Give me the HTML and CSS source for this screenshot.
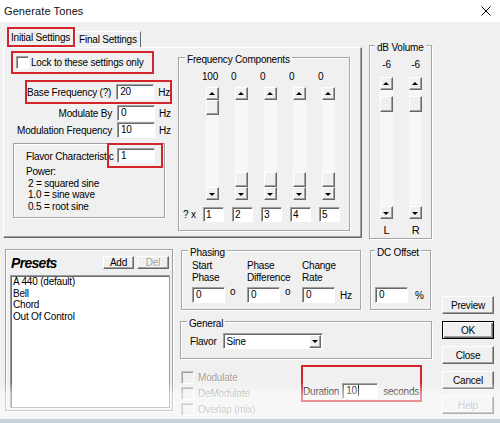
FILE: index.html
```html
<!DOCTYPE html>
<html lang="en">
  <head>
    <meta charset="UTF-8" />
    <title>Generate Tones</title>
    <link rel="stylesheet" href="styles.css">
  </head>
  <body>
    <!-- window caption -->
    <div class="caption">
      <span class="caption-text">Generate Tones</span>
      <svg class="close-x" width="10" height="10" viewBox="0 0 10 10">
        <path d="M0.5 0.5L9.5 9.5M9.5 0.5L0.5 9.5" stroke="#000" stroke-width="1" fill="none" />
      </svg>
    </div>

    <div class="dialog">
      <!-- tabs + volume -->
      <div class="top">
        <div class="tabarea">
          <div class="tabs">
            <div class="tab active">Initial Settings</div>
            <div class="tab">Final Settings</div>
          </div>
          <div class="panel">
            <div class="settings">
              <div class="lock mark"><span class="check"></span>Lock to these settings only</div>
              <div class="row base mark">
                <span class="lbl">Base Frequency (?)</span><span class="edit">20</span><span class="unit">Hz</span>
              </div>
              <div class="row">
                <span class="lbl">Modulate By</span><span class="edit">0</span><span class="unit">Hz</span>
              </div>
              <div class="row">
                <span class="lbl">Modulation Frequency</span><span class="edit">10</span><span class="unit">Hz</span>
              </div>
              <div class="flavor-box">
                <div class="flavor-row">
                  <span class="flavor-lbl">Flavor Characteristic</span>
                  <span class="mark flavor-mark"><span class="edit">1</span></span>
                </div>
                <div class="power">
                  <div>Power:</div>
                  <div class="pw">2 = squared sine</div>
                  <div class="pw">1.0 = sine wave</div>
                  <div class="pw">0.5 = root sine</div>
                </div>
              </div>
            </div>

            <div class="group freq">
              <span class="group-title">Frequency Components</span>
              <div class="freq-grid">
                <span></span>
                <span class="num">100</span>
                <span class="num">0</span>
                <span class="num">0</span>
                <span class="num">0</span>
                <span class="num">0</span>

                <span></span>
                <div class="sb">
                  <span class="btn sb-btn up"></span>
                  <div class="sb-track"><span class="btn sb-thumb first"></span></div>
                  <span class="btn sb-btn down"></span>
                </div>
                <div class="sb">
                  <span class="btn sb-btn up"></span>
                  <div class="sb-track end"><span class="btn sb-thumb"></span></div>
                  <span class="btn sb-btn down"></span>
                </div>
                <div class="sb">
                  <span class="btn sb-btn up"></span>
                  <div class="sb-track end"><span class="btn sb-thumb"></span></div>
                  <span class="btn sb-btn down"></span>
                </div>
                <div class="sb">
                  <span class="btn sb-btn up"></span>
                  <div class="sb-track end"><span class="btn sb-thumb"></span></div>
                  <span class="btn sb-btn down"></span>
                </div>
                <div class="sb">
                  <span class="btn sb-btn up"></span>
                  <div class="sb-track end"><span class="btn sb-thumb"></span></div>
                  <span class="btn sb-btn down"></span>
                </div>

                <span class="mult">? x</span>
                <span class="edit">1</span>
                <span class="edit">2</span>
                <span class="edit">3</span>
                <span class="edit">4</span>
                <span class="edit">5</span>
              </div>
            </div>
          </div>
        </div>

        <div class="group volume">
          <span class="group-title">dB Volume</span>
          <div class="vol-grid">
            <span class="val">-6</span>
            <span class="val">-6</span>
            <div class="sb">
              <span class="btn sb-btn up"></span>
              <div class="sb-track"><span class="btn sb-thumb vol"></span></div>
              <span class="btn sb-btn down"></span>
            </div>
            <div class="sb">
              <span class="btn sb-btn up"></span>
              <div class="sb-track"><span class="btn sb-thumb vol"></span></div>
              <span class="btn sb-btn down"></span>
            </div>
            <span class="ch">L</span>
            <span class="ch">R</span>
          </div>
        </div>
      </div>

      <!-- presets, phasing, buttons -->
      <div class="bottom">
        <div class="presets">
          <div class="presets-head">
            <span class="presets-title">Presets</span>
            <span class="btn small add">Add</span>
            <span class="btn small off">Del</span>
          </div>
          <ul class="listbox">
            <li>A 440 (default)</li>
            <li>Bell</li>
            <li>Chord</li>
            <li>Out Of Control</li>
          </ul>
        </div>

        <div class="middle">
          <div class="phase-row">
            <div class="group phasing">
              <span class="group-title">Phasing</span>
              <div class="phase-cols">
                <div class="phase-col">
                  <div class="phase-lbl">Start<br>Phase</div>
                  <div class="phase-in"><span class="edit">0</span><span class="deg">o</span></div>
                </div>
                <div class="phase-col">
                  <div class="phase-lbl">Phase<br>Difference</div>
                  <div class="phase-in"><span class="edit">0</span><span class="deg">o</span></div>
                </div>
                <div class="phase-col">
                  <div class="phase-lbl">Change<br>Rate</div>
                  <div class="phase-in"><span class="edit">0</span><span class="unit">Hz</span></div>
                </div>
              </div>
            </div>
            <div class="group dc">
              <span class="group-title">DC Offset</span>
              <div class="dc-in"><span class="edit">0</span><span class="unit">%</span></div>
            </div>
          </div>

          <div class="group general">
            <span class="group-title">General</span>
            <div class="gen-row">
              <span>Flavor</span>
              <div class="select">
                <span class="select-text">Sine</span>
                <span class="btn drop"></span>
              </div>
            </div>
          </div>

          <div class="options">
            <div class="opt-checks">
              <div class="opt"><span class="check"></span>Modulate</div>
              <div class="opt"><span class="check"></span>DeModulate</div>
              <div class="opt"><span class="check"></span>Overlap (mix)</div>
            </div>
            <div class="duration mark">
              <span>Duration</span>
              <span class="edit">10<i class="caret"></i></span>
              <span class="unit">seconds</span>
            </div>
          </div>
        </div>

        <div class="buttons">
          <span class="btn">Preview</span>
          <span class="btn default">OK</span>
          <span class="btn">Close</span>
          <span class="btn">Cancel</span>
          <span class="btn off">Help</span>
        </div>
      </div>
    </div>
    <div class="strip"></div>
  </body>
</html>
```

FILE: styles.css
```css
* {
  margin: 0;
  padding: 0;
  box-sizing: border-box;
}
body {
  width: 500px;
  height: 423px;
  overflow: hidden;
  background: #f0f0f0;
  font-family: "Liberation Sans", Arial, sans-serif;
  font-size: 10px;
  letter-spacing: -0.2px;
  color: #000;
}

/* caption */
.caption {
  height: 22px;
  background: #fff;
  display: flex;
  align-items: center;
  justify-content: space-between;
  padding: 0 9px 0 4px;
}
.caption-text {
  font-size: 11px;
  letter-spacing: 0.1px;
  color: #111;
}

.dialog {
  position: relative;
  height: 397px;
  padding-top: 5px;
}
/* faded band near the bottom edge */
.dialog::after {
  content: "";
  position: absolute;
  left: 0;
  right: 0;
  top: 360px;
  height: 37px;
  background: linear-gradient(rgba(255, 255, 255, 0), rgba(255, 255, 255, 0.5) 35%, rgba(255, 255, 255, 0.45));
  pointer-events: none;
}
.strip {
  height: 4px;
  background: #c4d2dc;
}

/* common controls */
.btn {
  background: #f0f0f0;
  border: 1px solid;
  border-color: #fff #696969 #696969 #fff;
  box-shadow: inset -1px -1px #a0a0a0;
}
.edit {
  display: block;
  flex: none;
  height: 16px;
  background: #fff;
  border: 1px solid;
  border-color: #a0a0a0 #fff #fff #a0a0a0;
  box-shadow: inset 1px 1px #696969;
  padding: 0 0 0 3px;
  line-height: 14px;
  white-space: nowrap;
}
.check {
  flex: none;
  width: 13px;
  height: 13px;
  background: #fff;
  border: 1px solid;
  border-color: #a0a0a0 #fff #fff #a0a0a0;
  box-shadow: inset 1px 1px #696969;
}
.mark {
  border: 2px solid #d3252c;
}
.group {
  flex: none;
  border: 1px solid #a6a6a6;
  box-shadow: inset 1px 1px #fff, 1px 1px #fff;
}
.group-title {
  display: block;
  width: max-content;
  margin: -5px 0 0 6px;
  padding: 0 2px;
  background: #f0f0f0;
  line-height: 13px;
}
.off {
  color: #a0a0a0;
  text-shadow: 1px 1px #fff;
}

/* top half */
.top {
  display: flex;
  align-items: flex-start;
}
.tabarea {
  width: 359px;
  margin-left: 3px;
}
.tabs {
  display: flex;
  align-items: flex-end;
  height: 20px;
  padding-left: 4px;
}
.tab {
  width: 66px;
  height: 16px;
  padding-left: 3px;
  border-left: 1px solid #fff;
  border-top: 1px solid #fff;
  border-right: 1px solid #696969;
  line-height: 15px;
}
.tab.active {
  width: 68px;
  height: 20px;
  padding-left: 2px;
  border: 2px solid #d3252c;
  line-height: 17px;
}
.panel {
  display: flex;
  height: 191px;
  border: 1px solid;
  border-color: #fff #696969 #696969 #fff;
  box-shadow: inset -1px -1px #a0a0a0;
}

.settings {
  width: 174px;
  flex: none;
}
.lock {
  display: flex;
  align-items: center;
  width: 143px;
  height: 23px;
  margin: 3px 0 0 7px;
  padding-left: 3px;
}
.lock .check {
  margin-right: 2px;
}
.row {
  display: flex;
  align-items: center;
  height: 16px;
  margin-top: 1px;
}
.row .lbl {
  width: 108px;
  text-align: right;
  white-space: nowrap;
}
.row .edit {
  width: 38px;
  margin-left: 5px;
}
.unit {
  margin-left: 4px;
  white-space: nowrap;
}
.row.base {
  width: 147px;
  height: 24px;
  margin: 6px 0 0 21px;
}
.row.base .lbl {
  width: 85px;
}

.flavor-box {
  width: 152px;
  height: 75px;
  margin: 5px 0 0 9px;
  border: 1px solid #a0a0a0;
  box-shadow: inset 1px 1px #fff, 1px 1px #fff;
}
.flavor-row {
  display: flex;
  align-items: center;
  padding-left: 12px;
}
.flavor-lbl {
  width: 91px;
  flex: none;
  overflow: hidden;
  white-space: nowrap;
}
.flavor-mark {
  margin: -1px 0 0 -10px;
  padding: 3px 6px 3px 8px;
}
.flavor-mark .edit {
  width: 38px;
  height: 15px;
}
.power {
  margin-top: -2px;
  padding-left: 12px;
  line-height: 11.7px;
}
.pw {
  padding-left: 2px;
}

/* frequency components */
.freq {
  width: 172px;
  height: 174px;
  margin-top: 9px;
}
.freq-grid {
  display: grid;
  grid-template-columns: 23px repeat(5, 29px);
  margin-top: 5px;
}
.num {
  height: 12px;
  line-height: 12px;
}
.freq-grid .sb {
  height: 113px;
  margin: 4px 0 0 4px;
}
.freq-grid .edit {
  width: 21px;
  height: 15px;
  margin: 7px 0 0 1px;
  padding-left: 2px;
  line-height: 13px;
}
.mult {
  margin-top: 7px;
  padding-left: 4px;
  line-height: 15px;
  white-space: nowrap;
}

/* scroll bars */
.sb {
  width: 13px;
  display: flex;
  flex-direction: column;
  background: #f7f7f7;
}
.sb-btn {
  flex: none;
  height: 13px;
  display: flex;
  align-items: center;
  justify-content: center;
}
.sb-btn::after {
  content: "";
  border-left: 3px solid transparent;
  border-right: 3px solid transparent;
}
.sb-btn.up::after {
  border-bottom: 3px solid #000;
  margin: 0 1px 1px 0;
}
.sb-btn.down::after {
  border-top: 3px solid #000;
  margin: 1px 1px 0 0;
}
.sb-track {
  flex: 1;
  display: flex;
  flex-direction: column;
}
.sb-track.end {
  justify-content: flex-end;
}
.sb-thumb {
  display: block;
  height: 15px;
}
.sb-thumb.vol {
  height: 16px;
  margin-top: 6px;
}

/* volume */
.volume {
  width: 63px;
  height: 194px;
  margin: 18px 0 0 7px;
  padding-left: 10px;
}
.volume .group-title {
  margin-left: -5px;
}
.vol-grid {
  display: grid;
  grid-template-columns: 13px 13px;
  column-gap: 16px;
  justify-items: center;
  margin-top: 5px;
}
.val {
  height: 12px;
  line-height: 12px;
  white-space: nowrap;
}
.vol-grid .sb {
  height: 142px;
  margin-top: 6px;
}
.ch {
  margin-top: 5px;
  line-height: 12px;
  font-size: 11px;
}

/* bottom half */
.bottom {
  display: flex;
  align-items: flex-start;
  margin-top: 10px;
}
.presets {
  width: 168px;
  height: 162px;
  margin-left: 5px;
  border: 1px solid #a0a0a0;
  box-shadow: inset 1px 1px #fff, 1px 1px #fff;
}
.presets-head {
  display: flex;
  align-items: center;
  height: 13px;
  margin-top: 6px;
  padding: 0 3px 0 5px;
}
.presets-title {
  margin-right: auto;
  font-size: 14px;
  font-weight: bold;
  font-style: italic;
  letter-spacing: -0.7px;
}
.small {
  width: 32px;
  height: 13px;
  line-height: 11px;
  text-align: center;
}
.add {
  width: 31px;
  margin-right: 3px;
}
.listbox {
  list-style: none;
  width: 160px;
  height: 133px;
  margin: 6px 0 0 4px;
  padding-left: 2px;
  background: #fff;
  border: 1px solid #9a9a9a;
  box-shadow: inset 1px 1px #6a6a6a;
  line-height: 11.5px;
}

.middle {
  width: 253px;
  margin-left: 7px;
}
.phase-row {
  display: flex;
  margin-top: 1px;
}
.phasing {
  width: 180px;
  height: 60px;
  margin-left: 1px;
  padding-left: 10px;
}
.phasing .group-title {
  margin-left: -4px;
}
.phase-cols {
  display: flex;
  margin-top: 1px;
}
.phase-col {
  width: 55px;
}
.phase-lbl {
  line-height: 11.5px;
  white-space: nowrap;
}
.phase-in {
  display: flex;
  align-items: center;
  margin-top: 4px;
}
.phase-in .edit,
.dc-in .edit {
  width: 33px;
}
.deg {
  align-self: flex-start;
  margin-left: 5px;
  line-height: 10px;
}
.phase-in .unit {
  margin-left: 5px;
}
.dc {
  width: 61px;
  height: 60px;
  margin-left: 9px;
  padding-left: 4px;
}
.dc .group-title {
  margin-left: 0;
}
.dc-in {
  display: flex;
  align-items: center;
  margin-top: 28px;
}
.dc-in .unit {
  margin-left: 7px;
}

.general {
  width: 252px;
  height: 38px;
  margin-top: 11px;
  padding-left: 9px;
}
.general .group-title {
  margin-left: -3px;
}
.gen-row {
  display: flex;
  align-items: center;
  margin-top: 3px;
}
.select {
  display: flex;
  align-items: center;
  width: 100px;
  height: 16px;
  margin-left: 6px;
  background: #fff;
  border: 1px solid;
  border-color: #a0a0a0 #fff #fff #a0a0a0;
  box-shadow: inset 1px 1px #696969;
  padding: 1px 1px 0 3px;
}
.select-text {
  flex: 1;
}
.drop {
  width: 12px;
  height: 13px;
  display: flex;
  align-items: center;
  justify-content: center;
}
.drop::after {
  content: "";
  border-left: 3px solid transparent;
  border-right: 3px solid transparent;
  border-top: 3px solid #000;
}

.options {
  display: flex;
  align-items: flex-start;
}
.opt-checks {
  width: 120px;
  margin: 10px 0 0 1px;
}
.opt {
  display: flex;
  align-items: center;
  height: 16px;
  color: #a0a0a0;
  text-shadow: 1px 1px #fff;
}
.opt .check {
  margin-right: 4px;
  background: #f0f0f0;
  border-color: #c4c4c4 #fff #fff #c4c4c4;
  box-shadow: inset 1px 1px #a0a0a0;
}
.duration {
  display: flex;
  align-items: center;
  width: 121px;
  height: 37px;
  margin-top: 6px;
  padding-top: 16px;
  padding-bottom: 1px;
}
.duration .edit {
  width: 36px;
  margin-left: 3px;
}
.duration .unit {
  margin-left: 5px;
}
.caret {
  display: inline-block;
  width: 1px;
  height: 11px;
  margin-left: 1px;
  vertical-align: -2px;
  background: #000;
}

.buttons {
  display: flex;
  flex-direction: column;
  gap: 7px;
  width: 52px;
  margin-left: 9px;
  padding-top: 47px;
}
.buttons .btn {
  height: 18px;
  display: flex;
  align-items: center;
  justify-content: center;
}
.buttons .default {
  border-color: #000;
  box-shadow: inset 1px 1px #fff, inset -1px -1px #696969, inset -2px -2px #a0a0a0;
}
```
